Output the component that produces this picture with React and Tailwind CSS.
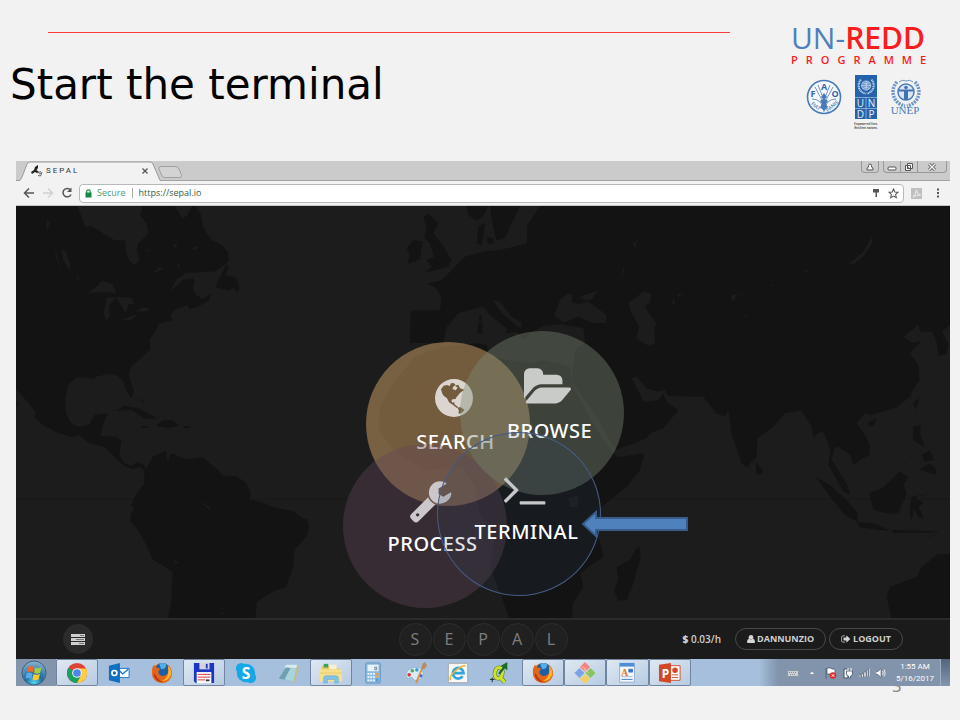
import React from "react";

const UI = "font-['Open_Sans','Noto_Sans',sans-serif]";

function WorldMap() {
  return (
    <svg
      className="absolute inset-0 h-full w-full"
      viewBox="16 206 934 412"
      preserveAspectRatio="xMidYMid slice"
      aria-hidden="true"
    >
      <rect x="0" y="190" width="980" height="450" fill="#1c1c1c" />
      <path d="M16 499H950" stroke="#171717" strokeWidth="1" strokeDasharray="3 1" />
      <g transform="translate(16 200) scale(.33333)" fill="#131313">
        <path d="M0 18L182 18L195 45L208 80L225 78L250 92L272 108L295 120L328 122L330 160L340 182L355 196L370 180L362 148L366 130L388 112L397 98L392 72L373 45L380 18L475 18L500 56L515 45L528 18L540 18L555 45L560 75L572 100L588 120L618 135L637 158L637 185L600 214L560 217L510 218L480 240L462 275L500 240L530 235L537 245L530 262L540 285L560 297L585 280L580 300L545 320L520 328L515 315L480 327L462 345L470 362L430 370L418 392L400 420L403 447L385 465L345 500L338 520L345 550L354 575L346 594L332 575L322 545L305 527L275 522L240 530L235 538L210 532L180 535L155 555L148 600L150 640L165 668L185 680L220 674L235 645L275 640L262 672L252 708L300 710L317 722L310 765L325 788L345 797L365 785L385 795L390 808L410 770L450 752L455 785L465 760L490 770L520 778L560 772L580 790L600 805L620 827L660 828L690 848L705 880L700 900L735 905L770 922L830 932L860 955L875 960L880 985L870 1010L835 1050L832 1100L810 1160L770 1175L722 1205L718 1260L456 1260L466 1200L470 1115L410 1078L398 1050L370 995L342 962L345 940L355 930L345 915L360 885L385 850L385 815L375 800L350 808L320 795L290 765L265 740L220 730L190 705L165 712L120 695L85 678L58 655L58 635L35 605L0 568Z" />
        <path d="M597 262L630 194L638 198L630 225L660 232L671 262L665 278L650 262L640 272ZM300 632L325 618L365 624L425 655L388 656L345 630ZM420 678L440 660L470 660L490 677L455 684ZM375 679H397V684H380ZM503 678H522V683H505ZM375 592L384 606L378 608ZM0 604L10 616L4 620Z" />
        <g fill="#1c1c1c">
          <path d="M215 278L240 262L258 242L290 252L302 280L270 276ZM272 294L300 290L278 318L281 350L270 361L263 340ZM300 292L345 292L356 312L340 312L328 338L318 320ZM315 360L365 342L345 360ZM358 334L380 322L400 325L395 334ZM135 148L150 155L163 195L160 214L142 180ZM120 145L125 180L142 215L132 200L118 170ZM92 60L102 66L92 95ZM470 1076L488 1088L480 1092ZM612 1245L628 1230L622 1242ZM545 900L580 920L584 932Z" />
          <path d="M385 152L400 147L392 156ZM430 200L440 208L410 222ZM470 135L484 130L480 145ZM525 145L545 138L540 150ZM480 198L490 190L491 204ZM180 235L190 228L185 240Z" />
        </g>
      </g>
      <g transform="translate(330 200) scale(.33333)" fill="#131313">
        <path d="M630 18L1860 18L1860 375L1835 395L1855 430L1850 462L1825 467L1820 425L1805 395L1772 395L1765 375L1720 410L1745 428L1775 422L1740 460L1765 495L1768 540L1745 575L1740 590L1700 622L1655 635L1625 645L1605 640L1580 668L1605 705L1620 740L1618 765L1590 780L1570 795L1560 765L1525 740L1512 745L1505 780L1530 820L1550 850L1560 882L1540 875L1515 830L1495 795L1502 750L1478 692L1450 710L1445 680L1412 630L1385 637L1365 640L1330 680L1282 715L1280 770L1250 802L1235 790L1205 705L1195 630L1185 648L1160 642L1120 590L1015 588L1005 570L985 575L950 565L920 530L905 535L938 600L945 605L985 600L1000 580L1010 605L1045 630L1000 685L960 700L950 715L900 735L860 748L848 735L800 650L725 545L735 450L765 430L760 385L690 372L640 378L600 400L585 420L560 395L528 400L530 385L480 345L460 320L440 325L385 340L350 380L340 430L240 428L242 332L330 330L335 295L320 265L292 250L330 242L345 232L370 205L405 170L460 155L520 148L590 130L592 75Z" />
        <path d="M255 470L340 440L440 430L470 435L480 470L600 490L640 480L720 500L725 550L800 690L860 772L943 760L930 810L890 860L810 925L790 980L812 1030L820 1070L750 1120L760 1160L728 1210L725 1260L540 1260L515 1190L480 1100L495 1010L450 940L435 860L395 800L290 810L200 760L145 690L150 620L190 550Z" />
        <path d="M410 18L475 18L460 48L440 62L415 45ZM480 18L570 18L545 70L525 115L500 122L488 75ZM445 80L465 68L462 100L455 138L440 130ZM470 112L492 115L488 132L472 130Z" />
        <path d="M280 50L295 40L325 70L310 100L340 140L365 180L355 200L285 218L305 200L290 180L312 170L300 130L282 115L290 85ZM230 145L250 120L278 125L270 178L232 192L240 165ZM445 368L458 365L456 402L442 398ZM448 345L455 344L456 362H448Z" />
        <path d="M920 1045L928 1040L932 1075L905 1165L890 1200L865 1202L852 1170L865 1140L860 1100L900 1080ZM1278 785L1300 812L1292 825L1278 822ZM1458 832L1500 855L1550 900L1584 940L1582 965L1545 945L1500 890ZM1580 965L1640 972L1680 992L1650 990L1590 982ZM1685 990L1830 994L1800 998L1690 998ZM1618 880L1660 862L1710 815L1735 832L1720 855L1730 880L1705 938L1680 942L1630 930ZM1745 890L1800 880L1755 892L1780 910L1765 920L1780 955L1765 950L1752 925L1745 960L1738 940ZM1750 680L1772 676L1770 705L1785 740L1760 728L1748 715ZM1775 765L1800 750L1810 780L1785 785ZM1770 808L1800 790L1820 810L1815 825L1790 815ZM1750 610L1767 592L1758 630ZM1615 665L1640 655L1632 675L1615 680ZM1790 1015L1825 995L1800 1012ZM1860 1062L1825 1062L1775 1100L1760 1130L1680 1160L1670 1190L1685 1260H1860ZM1720 795L1740 770L1724 792Z" />
        <g fill="#1c1c1c">
          <path d="M672 345L690 300L715 280L728 285L725 305L745 312L775 305L830 345L828 368L790 370L745 350L700 368ZM750 290L805 270L785 298L765 303Z" />
          <path d="M895 310L940 275L965 280L960 305L945 320L960 345L982 372L973 380L975 432L955 437L918 415L928 380L905 340ZM488 300L510 305L545 350L575 368L572 385L520 345Z" />
          <path d="M1205 285L1272 278L1220 286L1208 305L1203 295ZM1238 350L1255 344L1248 352ZM1625 110L1627 128L1600 170L1570 193L1558 190L1600 155ZM1030 290L1036 315L1026 312ZM1042 282L1060 284L1045 290ZM1420 210L1434 212L1426 220ZM1320 252L1334 258H1322ZM910 130L935 115L918 122L918 152ZM880 200L884 205L870 245Z" />
          <path d="M715 895L745 885L742 920L720 922Z" />
        </g>
      </g>
    </svg>
  );
}

function GlobeIcon() {
  return (
    <svg viewBox="0 0 114 114" className="h-[38px] w-[38px]" fill="#dcd5cf">
      <path
        fillRule="evenodd"
        d="M57 0A57 57 0 1 1 57 114A57 57 0 1 1 57 0ZM18 31L26 20L36 18L44 21L48 13L56 12L62 18L56 22L52 30L62 34L68 26L60 20L70 17L75 28L88 32L80 38L74 43L68 50L63 56L62 60L52 61L49 66L53 71L58 69L58 75L64 80L72 86L66 87L54 78L42 70L36 58L26 50L22 44ZM68 86L76 84L88 92L84 98L74 104L70 102L72 96Z"
      />
    </svg>
  );
}
function FolderIcon() {
  return (
    <svg viewBox="0 0 1920 1792" className="h-[45px] w-[48px]" fill="#c9cbc8">
      <path d="M1879 952q0 31-31 66l-336 396q-43 51-120.5 86.5t-143.5 35.5h-1088q-34 0-60.5-13t-26.5-43q0-31 31-66l336-396q43-51 120.5-86.5t143.5-35.5h1088q34 0 60.5 13t26.5 43zm-343-344v160h-832q-94 0-197 47.5t-164 119.5l-337 396-5 6q0-4-.5-12.5t-.5-12.5v-960q0-92 66-158t158-66h320q92 0 158 66t66 158v32h544q92 0 158 66t66 158z" />
    </svg>
  );
}
function WrenchIcon() {
  return (
    <svg viewBox="0 0 1792 1792" className="h-[45px] w-[45px]" fill="#cbc7ca">
      <path d="M448 1472q0-26-19-45t-45-19-45 19-19 45 19 45 45 19 45-19 19-45zm644-420l-682 682q-37 37-90 37-52 0-91-37l-106-108q-38-36-38-90 0-53 38-91l681-681q39 98 114.5 173.5t173.5 114.5zm634-435q0 39-23 106-47 134-164.5 217.5t-258.5 83.5q-185 0-316.5-131.5t-131.5-316.5 131.5-316.5 316.5-131.5q58 0 121.5 16.5t107.5 46.5q16 11 16 28t-16 28l-293 169v224l193 107q5-3 79-48.5t135.5-81 70.5-35.5q15 0 23.5 10t8.5 25z" />
    </svg>
  );
}
function TerminalIcon() {
  return (
    <svg viewBox="0 0 1792 1792" className="h-[45px] w-[45px]" fill="#c6c7c9">
      <path d="M649 983l-466 466q-10 10-23 10t-23-10l-50-50q-10-10-10-23t10-23l393-393-393-393q-10-10-10-23t10-23l50-50q10-10 23-10t23 10l466 466q10 10 10 23t-10 23zm1079 457v64q0 14-9 23t-23 9h-960q-14 0-23-9t-9-23v-64q0-14 9-23t23-9h960q14 0 23 9t9 23z" />
    </svg>
  );
}

const bubbles = [
  { label: "SEARCH", Icon: GlobeIcon, cls: "left-[23px] top-[11px] bg-[#d3a569]/50" },
  { label: "PROCESS", Icon: WrenchIcon, cls: "left-0 top-[113px] bg-[#624658]/40" },
  { label: "BROWSE", Icon: FolderIcon, cls: "left-[117px] top-0 bg-[#7e8b77]/40" },
  { label: "TERMINAL", Icon: TerminalIcon, cls: "left-[94px] top-[101px] bg-[#2f4166]/15 ring-1 ring-inset ring-[#465c86]" },
];

function Bubble({ label, Icon, cls }) {
  return (
    <button className={"absolute flex h-[164px] w-[164px] flex-col items-center rounded-full pl-4 pt-[33px] " + cls}>
      <span className="flex h-[46px] items-center pr-1">
        <Icon />
      </span>
      <span className="text-xl leading-[42px] font-medium tracking-wide text-white font-['Noto_Sans','Open_Sans',sans-serif]">
        {label}
      </span>
    </button>
  );
}

function Wreath({ color }) {
  return (
    <g fill="none" stroke={color}>
      <path d="M6 3C-1 10 1 24 14 27M24 3C31 10 29 24 16 27" strokeWidth="3.500" strokeDasharray="2 1" />
    </g>
  );
}

function PartnerLogos() {
  return (
    <div className="flex items-start justify-center gap-3">
      <svg viewBox="0 0 36 36" className="mt-1 h-9 w-9" role="img" aria-label="FAO">
        <circle cx="18" cy="18" r="16.5" fill="#f6f8fb" stroke="#4a7bb8" strokeWidth="1.6" />
        <path d="M18 33V17M9 8l8 15M12 6l6 15M27 8l-8 15M24 6l-6 15M6 20q9 0 11 9M30 20q-9 0-11 9" stroke="#6f97c8" fill="none" />
        <path d="M18 14l3 4-2 2 3 2-2 3 2 3-4 4-4-4 2-3-2-3 3-2-2-2z" fill="#4a7bb8" />
        <g fill="#2f67ab" fontFamily="Open Sans" fontWeight="700" fontSize="9" textAnchor="middle">
          <text x="7" y="18">F</text><text x="18" y="11">A</text><text x="29" y="18">O</text>
        </g>
        <g fill="#4a7bb8" fontFamily="Open Sans" fontWeight="600" fontSize="5" textAnchor="middle">
          <text x="10" y="29" transform="rotate(40 10 27)">FIAT</text>
          <text x="26" y="29" transform="rotate(-40 26 27)">PANIS</text>
        </g>
      </svg>
      <svg viewBox="0 0 24 56" className="h-14 w-6" role="img" aria-label="UNDP">
        <rect x="1" width="22" height="44" fill="#2463ab" />
        <g transform="translate(3.5 3) scale(.58)"><Wreath color="#c5d6ea" /><circle cx="15" cy="13" r="8" fill="#6b97cb" stroke="#dfe9f5" /><path d="M7 13h16M15 5v16M9 8q6 4 12 0M9 18q6-4 12 0" stroke="#dfe9f5" fill="none" /></g>
        <path d="M1 22.500H23M1 33.500H23M12 22V44" stroke="#a9c3e2" strokeWidth=".7" />
        <g fill="#e4edf7" fontFamily="Open Sans" fontSize="10" textAnchor="middle">
          <text x="6.500" y="32">U</text><text x="17.500" y="32">N</text><text x="6.500" y="43">D</text><text x="17.500" y="43">P</text>
        </g>
        <g fill="#333" fontFamily="Open Sans" fontStyle="italic" fontWeight="600" fontSize="3" textAnchor="middle">
          <text x="12" y="50">Empowered lives.</text><text x="12" y="54">Resilient nations.</text>
        </g>
      </svg>
      <svg viewBox="0 0 32 40" className="mt-1 h-10 w-8" role="img" aria-label="UNEP">
        <g transform="translate(1 0)"><Wreath color="#6d95c9" /></g>
        <circle cx="16" cy="13" r="8" fill="#dbe6f3" stroke="#4a7bb8" strokeWidth="1.500" />
        <path d="M9 3q3-3 7-1q4-2 7 1" stroke="#6d95c9" fill="none" />
        <circle cx="16" cy="8.500" r="1.800" fill="#3f73b3" />
        <path d="M9 10.500h14v2h-5V21h-4v-8.500H9z" fill="#3f73b3" />
        <text x="15" y="35" fill="#4a7bb8" fontFamily="Liberation Serif" fontSize="11" textAnchor="middle">UNEP</text>
      </svg>
    </div>
  );
}

function SlideHeader() {
  return (
    <header className="flex h-[161px] items-start pr-[30px]">
      <div className="flex-1 pt-8">
        <div className="ml-12 h-px bg-[#fb3c3c]" />
        <h1 className="mt-6 pl-[10px] text-[42px] leading-[56px] text-black font-['DejaVu_Sans',sans-serif]">
          Start the terminal
        </h1>
      </div>
      <div className={"ml-[61px] flex w-[139px] flex-col pt-[22px] " + UI}>
        <div className="text-[30px] leading-8 font-medium whitespace-nowrap text-[#4f7fbd]">
          UN-<span className="font-semibold text-[#fb1c1c]">REDD</span>
        </div>
        <div className="text-[11px] leading-3 font-semibold whitespace-nowrap tracking-[8px] text-[#fb1c1c]">PROGRAMME</div>
        <div className="mt-[9px] pl-[6px]">
          <PartnerLogos />
        </div>
      </div>
    </header>
  );
}

function TabStrip() {
  return (
    <div className="flex h-5 items-start border-b border-[#a3a3a3] bg-[#cbcbcb]">
      <div className="relative flex h-5 w-[145px] shrink-0 items-center gap-[3px] pl-[15px]">
        <svg viewBox="0 0 145 20" className="absolute inset-0 h-5 w-[145px]" aria-hidden="true">
          <path d="M0 20H3Q5 19 6 16L11 3Q12 1 14 1H134Q136 1 137 3L143 17Q144 20 145 20Z" fill="#f2f2f2" />
          <path d="M0 19.500H3Q5 19 6 16L11 3Q12 1 14 1H134Q136 1 137 3L143 17Q144 20 145 20" fill="none" stroke="#999" />
        </svg>
        <svg viewBox="0 0 12 12" className="relative h-3 w-3 shrink-0" aria-hidden="true">
          <path d="M0 7L3 5L4 2L7 0L7 3L5.500 5L8 7L6 8L4 7L1 9Z" fill="#222" />
          <path d="M6 8L10 6.500M11 7L9.500 11L7 10.500M8 9L10 8" stroke="#666" fill="none" />
        </svg>
        <span className="relative flex-1 text-[8px] leading-5 tracking-[2px] text-[#333] font-[Roboto,sans-serif]">SEPAL</span>
        <button aria-label="Close tab" className="relative mr-3 h-2 w-2">
          <svg viewBox="0 0 8 8" className="h-2 w-2"><path d="M1.500 1.500l5 5M6.500 1.500l-5 5" stroke="#555" strokeWidth="1.300" /></svg>
        </button>
      </div>
      <button aria-label="New tab" className="ml-[-3px] h-5 w-6">
        <svg viewBox="0 0 24 20" className="h-5 w-6"><path d="M2 5.500H18Q20 5.500 21 8L24 15Q24 16.500 22 16.500H7Q5 16.500 4 15L1 8Q1 5.500 2 5.500Z" fill="#d3d3d3" stroke="#a0a0a0" /></svg>
      </button>
      <div className="ml-auto flex gap-1 pr-[3px]">
        <button aria-label="Profile" className="flex h-3 w-[18px] items-center justify-center rounded-b border border-t-0 border-[#999]">
          <svg viewBox="0 0 8 8" className="h-2 w-2"><path d="M2.500 4V2.500a1.500 1.500 0 0 1 3 0V4l1.500 1v2H1V5z" fill="#f6f6f6" stroke="#555" /></svg>
        </button>
        <div className="flex h-3 rounded-b border border-t-0 border-[#999]">
          <button aria-label="Minimize" className="flex w-[17px] items-center justify-center border-r border-[#999]">
            <svg viewBox="0 0 10 8" className="h-2 w-[10px]"><rect x="1" y="4" width="8" height="3" rx="1" fill="#fff" stroke="#555" /></svg>
          </button>
          <button aria-label="Restore" className="flex w-[17px] items-center justify-center border-r border-[#999]">
            <svg viewBox="0 0 10 10" className="h-[10px] w-[10px]"><path d="M3.500 1.500h5v5h-5zM1.500 3.500h5v5h-5z" fill="#f2f2f2" stroke="#555" /><path d="M3.500 5.500h1v1h-1z" stroke="#555" fill="none" /></svg>
          </button>
          <button aria-label="Close window" className="flex w-7 items-center justify-center">
            <svg viewBox="0 0 8 8" className="h-2 w-2"><path d="M1 1l6 6M7 1l-6 6" stroke="#555" strokeWidth="3" /><path d="M1 1l6 6M7 1l-6 6" stroke="#f4f4f4" strokeWidth="1.400" /></svg>
          </button>
        </div>
      </div>
    </div>
  );
}

function Toolbar() {
  return (
    <div className="flex h-[25px] items-center border-b border-[#c4c6c4] bg-[#f2f2f2] pr-[10px] pl-[7px]">
      <button aria-label="Back">
        <svg viewBox="0 0 12 12" className="h-3 w-3" fill="none" stroke="#555" strokeWidth="1.500"><path d="M11 6H1.500M6 1.500L1.500 6L6 10.500" /></svg>
      </button>
      <button aria-label="Forward" className="ml-[7px]">
        <svg viewBox="0 0 12 12" className="h-3 w-3" fill="none" stroke="#d0d0d0" strokeWidth="1.500"><path d="M1 6H9.500M6 1.500L10.500 6L6 10.500" /></svg>
      </button>
      <button aria-label="Reload" className="ml-[7px]">
        <svg viewBox="0 0 12 12" className="h-3 w-3" fill="none" stroke="#555" strokeWidth="1.500"><path d="M9.500 3A4.200 4.200 0 1 0 10 7.500" /><path d="M10.500 0.500V5H6z" fill="#555" stroke="none" /></svg>
      </button>
      <div className="ml-[6px] flex h-[19px] flex-1 items-center rounded-sm border border-[#b8b8b8] bg-white pr-1 pl-[5px]">
        <svg viewBox="0 0 7 9" className="h-[9px] w-[7px]"><path d="M1.700 4V2.700a1.800 1.800 0 0 1 3.600 0V4" fill="none" stroke="#128a46" strokeWidth="1.100" /><rect x=".5" y="3.500" width="6" height="5" fill="#128a46" /></svg>
        <span className={"ml-[5px] text-[9px] text-[#4f9a70] " + UI}>Secure</span>
        <span className="mx-[6px] h-[10px] w-px bg-[#aaa]" />
        <input
          aria-label="Address"
          defaultValue="https://sepal.io"
          className={"min-w-0 flex-1 bg-transparent text-[9px] text-[#35604a] outline-none " + UI}
        />
        <svg viewBox="0 0 8 10" className="h-[10px] w-2" fill="#555"><path d="M1 1h6v3.500H5V9H3.500V4.500H1z" /></svg>
        <button aria-label="Bookmark" className="ml-2">
          <svg viewBox="0 0 12 12" className="h-[11px] w-[11px]"><path d="M6 1l1.400 3.300 3.600.3-2.700 2.400.8 3.500L6 8.700 2.900 10.500l.8-3.500L1 4.600l3.600-.3z" fill="none" stroke="#555" strokeWidth="1.100" /></svg>
        </button>
      </div>
      <svg viewBox="0 0 11 11" className="ml-[7px] h-[11px] w-[11px]"><rect width="11" height="11" fill="#c0c0c0" /><path d="M2 9q3-2 3.500-7q.5 4 4 5q-4-.5-7.500 2" fill="none" stroke="#eee" /></svg>
      <button aria-label="Menu" className="ml-[14px]">
        <svg viewBox="0 0 4 12" className="h-3 w-1" fill="#555"><path d="M1 1.500h2v2H1zM1 5h2v2H1zM1 8.500h2v2H1z" /></svg>
      </button>
    </div>
  );
}

function AppFooter() {
  return (
    <div className={"grid h-[41px] grid-cols-[1fr_auto_1fr] items-center border-t-2 border-[#2b2b2b] bg-[#1b1b1b] pr-[47px] pb-px pl-[47px] " + UI}>
      <button aria-label="Tasks" className="flex h-[30px] w-[30px] items-center justify-center rounded-full bg-[#2b2b2b]">
        <svg viewBox="0 0 14 11" className="h-[11px] w-[14px]"><path d="M0 0h14v3H0zM0 4h14v3H0zM0 8h14v3H0z" fill="#cfcfcf" /><path d="M9 1.500h4M5 5.500h8M8 9.500h5" stroke="#777" /></svg>
      </button>
      <div className="flex gap-px">
        {["S", "E", "P", "A", "L"].map((c) => (
          <span key={c} className="flex h-[33px] w-[33px] items-center justify-center rounded-full border border-[#2d2d2d] bg-[#202020] text-base text-[#7b7b7b] font-['Noto_Sans','Open_Sans',sans-serif]">
            {c}
          </span>
        ))}
      </div>
      <div className="flex items-center justify-end gap-[3px] text-[#cfcfcf]">
        <span className="mr-[11px] text-[10px] font-semibold whitespace-nowrap"><b>$</b> 0.03/h</span>
        <button className="flex h-[22px] items-center gap-[2px] rounded-full border border-[#484848] px-[11px] text-[9px] font-bold">
          <svg viewBox="0 0 8 8" className="h-2 w-2" fill="#d5d5d5"><circle cx="4" cy="2.300" r="2.300" /><path d="M0 7Q0 4 2 3.500Q4 5.500 6 3.500Q8 4 8 7Q8 8 7 8H1Q0 8 0 7Z" /></svg>
          DANNUNZIO
        </button>
        <button className="flex h-[22px] items-center gap-[2px] rounded-full border border-[#484848] px-[11px] text-[9px] font-bold">
          <svg viewBox="0 0 1792 1792" className="h-[10px] w-[10px]" fill="#d5d5d5"><path d="M704 1440q0 4 1 20t.5 26.500-3 23.500-10 19.500-20.500 6.500h-320q-119 0-203.500-84.500t-84.500-203.500v-704q0-119 84.500-203.500t203.500-84.500h320q13 0 22.500 9.500t9.500 22.500q0 4 1 20t.5 26.500-3 23.500-10 19.500-20.500 6.500h-320q-66 0-113 47t-47 113v704q0 66 47 113t113 47h312l11.500 1 11.500 3 8 5.500 7 9 2 13.500zm928-544q0 26-19 45l-544 544q-19 19-45 19t-45-19-19-45v-288h-448q-26 0-45-19t-19-45v-384q0-26 19-45t45-19h448v-288q0-26 19-45t45-19 45 19l544 544q19 19 19 45z" /></svg>
          LOGOUT
        </button>
      </div>
    </div>
  );
}

const firefox = (
  <g>
    <circle cx="12" cy="12" r="11" fill="#e8751a" />
    <circle cx="12.500" cy="9" r="8" fill="#1c5fa8" />
    <path d="M9 2q5-2 8 1l-2 4-4 1z" fill="#4fb0e8" />
    <path d="M1 8L3 3L6 6L10 7L8 11Q9 16 14 15Q19 14 19 9L18 4Q24 9 22.500 15Q19 23 12 23Q2 22 1 12Z" fill="#e2661a" />
    <path d="M19 9L18.500 4Q23 9 22 14Q19 21 12 21Q19 17 19 9Z" fill="#f8b62a" />
    <path d="M3 15Q6 22 13 22Q6 19 4 12Z" fill="#b8331a" />
  </g>
);

const apps = [
  { name: "Chrome", on: true, art: (
    <g>
      <circle cx="12" cy="12" r="11" fill="#dc4437" />
      <path d="M12 12L2.500 6.500A11 11 0 0 0 12 23L16.500 14.500Z" fill="#1aa05f" />
      <path d="M12 7H21.800A11 11 0 0 1 12 23L16.500 14.500Z" fill="#ffcd40" />
      <circle cx="12" cy="12" r="5.300" fill="#f1f1f1" /><circle cx="12" cy="12" r="4.200" fill="#4a88ee" />
    </g>) },
  { name: "Outlook", art: (
    <g>
      <path d="M12 7h11v10H12z" fill="#fff" stroke="#1273c8" /><path d="M12 9l4 4 6-5" fill="none" stroke="#1273c8" strokeWidth="1.500" />
      <path d="M1 4L13 1V23L1 20z" fill="#0f6fc0" /><circle cx="7" cy="12" r="2.700" fill="none" stroke="#fff" strokeWidth="1.800" />
    </g>) },
  { name: "Firefox", art: firefox },
  { name: "Save", on: true, art: (
    <g>
      <path d="M1 1H23V23H3L1 21Z" fill="#1c36c4" /><path d="M7 1H18V8H7z" fill="#d4d4d8" /><path d="M14 2h2v5h-2z" fill="#1c36c4" />
      <path d="M4 11H20V23H4z" fill="#fff" /><path d="M5 13.500H19M5 16.500H19M5 19.500H13" stroke="#d8262e" /><path d="M14 20h4" stroke="#333" strokeWidth="2" />
    </g>) },
  { name: "Skype", art: (
    <g><circle cx="12" cy="12" r="10" fill="#16a8e6" /><circle cx="7" cy="7" r="6" fill="#16a8e6" /><circle cx="17" cy="17" r="6" fill="#16a8e6" />
      <text x="12" y="18" textAnchor="middle" fill="#fff" fontFamily="Open Sans" fontWeight="700" fontSize="17">S</text></g>) },
  { name: "Notepad", art: (
    <g><path d="M20 3L23 5L19 22L16 22Z" fill="#c9b98f" /><path d="M9 3L21 3L17 21L1 18Z" fill="#8cbcc8" /><path d="M9 3L21 3L20 7L7 6Z" fill="#d8ecee" /><path d="M9 6L1 18L10 20L20 7Z" fill="#6f9fb4" /><path d="M14 6L7 19L17 21L20 7Z" fill="#a8d4da" /></g>) },
  { name: "Explorer", on: true, art: (
    <g><path d="M2 4h8l2 3h10v14H2z" fill="#e6c963" /><path d="M4 2h5v4H4z" fill="#3da35a" /><path d="M10 3h8v5h-8z" fill="#f7f1d0" /><path d="M0 8h24v13H0z" fill="#f4e08d" /><path d="M0 12h24" stroke="#e5ca68" /><path d="M4 23v-6q0-2 3-2h10q3 0 3 2v6h-4v-4H8v4z" fill="#7fc4e8" stroke="#5a9cc4" strokeWidth=".5" /></g>) },
  { name: "Calculator", art: (
    <g><rect x="4" y="1" width="16" height="22" rx="1" fill="#8dbbe0" stroke="#6693bd" /><path d="M6 3h12v7H6z" fill="#e9f3fb" /><path d="M14 5.500h2v3h-2z" fill="none" stroke="#567" strokeWidth=".8" /><path d="M6 13h8M6 16.500h8M6 20h8" stroke="#f2f8fd" strokeWidth="2" strokeDasharray="2 1" /><path d="M15 13h3M15 16h3" stroke="#e8a14a" strokeWidth="2" /><path d="M16.500 18v3.500" stroke="#4a9fd8" strokeWidth="3" /></g>) },
  { name: "Paint", art: (
    <g><path d="M1 16Q0 9 9 6Q19 4 20 12Q19 21 10 20Q8 15 4 18Z" fill="#dce9f6" stroke="#8fb0d0" /><circle cx="8" cy="9.500" r="2" fill="#4caf50" /><circle cx="13" cy="8.500" r="2" fill="#3f9fd8" /><circle cx="4.500" cy="14" r="2" fill="#d33" /><circle cx="17" cy="15" r="2" fill="#3f6fd0" /><path d="M12 23L19 6" stroke="#d8903a" strokeWidth="2" /><path d="M18 7l1-5 3-2 2 4-3 4z" fill="#b98b62" /></g>) },
  { name: "Internet Explorer", art: (
    <g><path d="M1.500 1.500h21v21h-21z" fill="#f7f7f7" stroke="#aaa" /><path d="M17 15.500A5.800 5.800 0 1 1 18 12H8" fill="none" stroke="#33a5df" strokeWidth="3" /><path d="M4 20Q1 16 11 8Q19 2 20 5" fill="none" stroke="#ebb92f" strokeWidth="1.700" /></g>) },
  { name: "QGIS", art: (
    <g><path d="M11 6C6 6 4 18 10 18C15 18 17 6 11 6ZM12 16L17 22" fill="none" stroke="#4f7a18" strokeWidth="4.500" /><path d="M11 6C6 6 4 18 10 18C15 18 17 6 11 6ZM12 16L17 22" fill="none" stroke="#cfe030" strokeWidth="3.400" /><path d="M11 13L18 4" stroke="#166c28" strokeWidth="2.500" /><path d="M20 0L20 9L13 4Z" fill="#166c28" /><path d="M1 19h5M3.500 17v5" stroke="#222" /></g>) },
  { name: "Firefox window", on: true, art: firefox },
  { name: "Git", on: true, art: (
    <g><path d="M12 0L17.500 5.500L12 11L6.500 5.500Z" fill="#f4837d" /><path d="M6 6.500L11.500 12L6 17.500L.5 12Z" fill="#7ba4e8" /><path d="M18 6.500L23.500 12L18 17.500L12.500 12Z" fill="#84c75c" /><path d="M12 13L17.500 18.500L12 24L6.500 18.500Z" fill="#f2cf62" /><path d="M8 4l8 8M12 6v6" stroke="#f9c0ba" /></g>) },
  { name: "WordPad", on: true, art: (
    <g><rect x="4" y="2" width="16" height="20" fill="#f4f8fc" stroke="#8eadce" /><path d="M4 1h16v4H4z" fill="#4c8fd6" /><path d="M14 8h4v3h-4zM6 19h12" fill="#3b77c2" stroke="#3b77c2" /><path d="M6 16h12" stroke="#9ab8d8" /><text x="9.500" y="15" textAnchor="middle" fill="#e0772b" fontFamily="Liberation Serif" fontWeight="700" fontSize="11">A</text></g>) },
  { name: "PowerPoint", on: true, art: (
    <g><path d="M12 4h11v16H12z" fill="#fff" stroke="#d24726" /><circle cx="17.500" cy="9" r="3" fill="#d24726" /><path d="M14 14h7M14 17h7" stroke="#d24726" /><path d="M0 3L13 1V23L0 21z" fill="#d24726" /><text x="7" y="17" textAnchor="middle" fill="#fff" fontFamily="Open Sans" fontWeight="700" fontSize="13">P</text></g>) },
];

function Taskbar() {
  return (
    <div className="flex h-[27px] bg-[#a6bfdc]">
      <button aria-label="Start" className="flex w-10 shrink-0 items-center justify-center bg-[#8295ad] pr-1">
        <svg viewBox="0 0 26 26" className="h-[26px] w-[26px]">
          <defs><radialGradient id="orb" cx=".5" cy=".9" r=".9"><stop offset="0" stopColor="#55d5f2" /><stop offset=".4" stopColor="#1d6c9c" /><stop offset="1" stopColor="#8fb4d0" /></radialGradient></defs>
          <circle cx="13" cy="13" r="12" fill="url(#orb)" stroke="#3d5f80" />
          <path d="M7.500 7q3-2 5.500 0l-1 5.500q-3-2-6 0z" fill="#ee6a2c" /><path d="M14 7.500q3 1.500 6.500 0l-1.500 5.500q-3 1.500-6 0z" fill="#a3cb45" />
          <path d="M5.500 13.500q3-2 6 0l-1 5.500q-3-2-6 0z" fill="#5aa9e8" /><path d="M12.500 14q3 1.500 6.500 0l-1.500 5.500q-3 1.500-6 0z" fill="#f8c832" />
        </svg>
      </button>
      <div className="grid w-[635px] grid-cols-15">
        {apps.map(({ name, on, art }) => (
          <button
            key={name}
            aria-label={name}
            className={
              "flex items-center justify-center rounded-xs border " +
              (on ? "border-[#7185a0] bg-linear-to-br from-[#dfe8f2] to-[#b7cbe2]" : "border-transparent")
            }
          >
            <svg viewBox="0 0 24 24" className="h-[22px] w-[22px]">{art}</svg>
          </button>
        ))}
      </div>
      <div className="ml-auto flex items-center bg-linear-to-r from-[#a6bfdc] via-[#8194ac] via-10% to-[#8194ac] pl-7">
        <div className="flex items-center gap-[6px]">
          <svg viewBox="0 0 12 8" className="mr-1 h-2 w-3"><rect x=".5" y="1.500" width="11" height="6" rx="1" fill="#c9cfd4" stroke="#8a949e" /><path d="M2 3.500h8M3 5.500h6" stroke="#8a949e" strokeDasharray="1 1" /></svg>
          <svg viewBox="0 0 6 4" className="mr-1 h-1 w-[6px]"><path d="M3 0l3 3.500H0z" fill="#eef2f6" stroke="#5b6b80" strokeWidth=".5" /></svg>
          <svg viewBox="0 0 12 12" className="h-3 w-3"><path d="M1 1v11M2 1h4l1 1h3v5H2z" fill="#fff" stroke="#4c5c70" strokeWidth=".8" /><circle cx="8" cy="8.500" r="3.300" fill="#d92f2a" /><path d="M6.800 7.300l2.400 2.400M9.200 7.300L6.800 9.700" stroke="#fff" /></svg>
          <svg viewBox="0 0 10 12" className="h-3 w-[10px]"><path d="M1 2h4v9H1z" fill="#f4f6f8" stroke="#445264" /><path d="M3.500 4h6v3q0 2-2 2v2h-2V9q-2 0-2-2z" fill="#fff" stroke="#445264" strokeWidth=".8" /><path d="M5 1v3M8 1v3" stroke="#fff" /></svg>
          <svg viewBox="0 0 11 9" className="h-[9px] w-[11px]"><path d="M0 7h2v2H0zM2.500 6h2v3h-2zM5 4h2v5H5zM7.500 2h1.500v7H7.500zM9.500 0H11v9H9.500z" fill="#f4f6f8" stroke="#445264" strokeWidth=".5" /></svg>
          <svg viewBox="0 0 10 10" className="h-[10px] w-[10px]"><path d="M0 3.500h2L5 .5v9l-3-3H0z" fill="#fff" stroke="#445264" strokeWidth=".6" /><path d="M6.500 3q1.500 2 0 4M8 1.500q2.500 3.500 0 7" fill="none" stroke="#e8edf2" /></svg>
        </div>
        <div className="ml-1 w-[50px] text-center text-[8px] leading-3 text-white font-[Roboto,sans-serif]">
          <div>1:55 AM</div>
          <div>5/16/2017</div>
        </div>
        <button aria-label="Show desktop" className="h-[27px] w-[10px] border-l border-[#9fb0c4] bg-linear-to-b from-[#52657c] to-[#8497ae]" />
      </div>
    </div>
  );
}

export default function App() {
  return (
    <div className="relative isolate min-h-screen bg-[#f2f2f2]">
      <SlideHeader />
      <main className="pr-[10px] pl-4">
        <TabStrip />
        <Toolbar />
        <section className="relative flex justify-center overflow-hidden bg-[#1c1c1c] pt-[125px] pb-[10px]">
          <WorldMap />
          <div className="relative h-[277px] w-[281px]">
            {bubbles.map((b) => (
              <Bubble key={b.label} {...b} />
            ))}
            <svg viewBox="0 0 108 30" className="absolute top-[178px] left-[238px] h-[30px] w-[108px]" aria-hidden="true">
              <path d="M2 15L15 3V9H106V21H15V27Z" fill="#4f81bd" stroke="#385d8a" strokeWidth="2" />
            </svg>
          </div>
        </section>
        <AppFooter />
        <Taskbar />
      </main>
      <div className="absolute top-[677px] right-[58px] -z-10 text-base leading-5 text-[#8b8b8b] font-['DejaVu_Sans',sans-serif]">3</div>
    </div>
  );
}
